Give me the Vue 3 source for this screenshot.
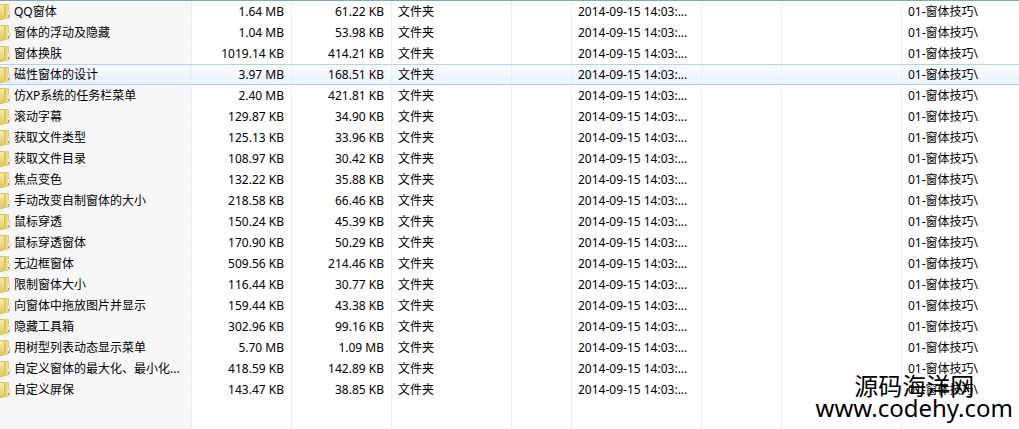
<script setup>
const date = '2014-09-15 14:03:...'
const path = '01-窗体技巧\\'
const selected = 3
const files = [
  ['QQ窗体', '1.64 MB', '61.22 KB'],
  ['窗体的浮动及隐藏', '1.04 MB', '53.98 KB'],
  ['窗体换肤', '1019.14 KB', '414.21 KB'],
  ['磁性窗体的设计', '3.97 MB', '168.51 KB'],
  ['仿XP系统的任务栏菜单', '2.40 MB', '421.81 KB'],
  ['滚动字幕', '129.87 KB', '34.90 KB'],
  ['获取文件类型', '125.13 KB', '33.96 KB'],
  ['获取文件目录', '108.97 KB', '30.42 KB'],
  ['焦点变色', '132.22 KB', '35.88 KB'],
  ['手动改变自制窗体的大小', '218.58 KB', '66.46 KB'],
  ['鼠标穿透', '150.24 KB', '45.39 KB'],
  ['鼠标穿透窗体', '170.90 KB', '50.29 KB'],
  ['无边框窗体', '509.56 KB', '214.46 KB'],
  ['限制窗体大小', '116.44 KB', '30.77 KB'],
  ['向窗体中拖放图片并显示', '159.44 KB', '43.38 KB'],
  ['隐藏工具箱', '302.96 KB', '99.16 KB'],
  ['用树型列表动态显示菜单', '5.70 MB', '1.09 MB'],
  ['自定义窗体的最大化、最小化...', '418.59 KB', '142.89 KB'],
  ['自定义屏保', '143.47 KB', '38.85 KB'],
].map(([name, size, packed]) => ({ name, size, packed }))
</script>

<template>
  <main class="list">
    <svg class="defs" width="0" height="0" aria-hidden="true">
      <defs>
        <linearGradient id="front" x1="0" y1="0" x2="0" y2="1">
          <stop offset="0" stop-color="#faf0b0" />
          <stop offset="1" stop-color="#e2c55c" />
        </linearGradient>
        <linearGradient id="back" x1="0" y1="0" x2="1" y2="0">
          <stop offset="0" stop-color="#dcbf55" />
          <stop offset="1" stop-color="#f8eda6" />
        </linearGradient>
      </defs>
    </svg>
    <table class="files">
      <colgroup>
        <col class="w-name" />
        <col class="w-size" />
        <col class="w-size" />
        <col class="w-type" />
        <col class="w-attr" />
        <col class="w-date" />
        <col class="w-crc" />
        <col class="w-method" />
        <col />
      </colgroup>
      <tbody>
        <tr v-for="(f, i) in files" :key="f.name" class="row" :class="{ selected: i === selected }">
          <td class="name">
            <div class="label">
              <svg class="folder" width="10" height="16" viewBox="0 0 10 16" aria-hidden="true">
                <path d="M3.5 0.5H8.5V7L9.5 8V13.5L8.5 14.5H4Z" fill="url(#back)" stroke="#e3cc78" />
                <path d="M0 0.5H3L4.5 2V14L2.5 15.5H0Z" fill="url(#front)" />
                <path d="M0 0.5H3L4.5 2V14L2.5 15.5H0" fill="none" stroke="#d9bd58" />
                <path d="M8.5 8V13" stroke="#fffdf0" />
                <path d="M8.5 11V13" stroke="#55ace6" />
              </svg>
              <span>{{ f.name }}</span>
            </div>
          </td>
          <td class="num">{{ f.size }}</td>
          <td class="num">{{ f.packed }}</td>
          <td>文件夹</td>
          <td></td>
          <td>{{ date }}</td>
          <td></td>
          <td></td>
          <td>{{ path }}</td>
        </tr>
        <tr class="rest">
          <td class="name"></td>
          <td v-for="n in 8" :key="n"></td>
        </tr>
      </tbody>
    </table>
    <div class="mark">
      <div>源码海洋网</div>
      <div>www.codehy.com</div>
    </div>
  </main>
</template>

<style>
body {
  margin: 0;
}
</style>

<style scoped>
.list {
  position: relative;
  display: flex;
  box-sizing: border-box;
  min-height: 100vh;
  border-top: 1px solid #7fa5d6;
  background: #fff;
  color: #000;
  font: 12px/19px "Noto Sans", "Noto Sans CJK SC", sans-serif;
  overflow: hidden;
}
.defs {
  position: absolute;
}
.files {
  width: 100%;
  table-layout: fixed;
  border-collapse: separate;
  border-spacing: 0;
}
.w-name { width: 192px; }
.w-size { width: 100px; }
.w-type { width: 120px; }
.w-attr { width: 60px; }
.w-date { width: 130px; }
.w-crc { width: 80px; }
.w-method { width: 120px; }
.row {
  height: 21px;
}
td {
  padding: 0 6px;
  border-right: 1px solid #e6effa;
  border-top: 1px solid transparent;
  border-bottom: 1px solid transparent;
  white-space: nowrap;
}
td:last-child {
  border-right: 0;
}
.num {
  padding-right: 7px;
  text-align: right;
}
.name {
  padding: 0;
  background: #f7f7f7;
}
.label {
  display: flex;
  align-items: center;
  gap: 4px;
  height: 19px;
}
.folder {
  flex: none;
}
.selected {
  background: linear-gradient(#fbfdff, #eaf2fd);
}
.selected .name {
  background: linear-gradient(#f8fafd, #e8effa);
}
.selected td {
  border-top-color: #b0d2f8;
  border-bottom-color: #b0d2f8;
}
.mark {
  position: absolute;
  right: 6px;
  bottom: 10px;
  font-size: 24px;
  line-height: 22px;
  text-align: center;
}
</style>
